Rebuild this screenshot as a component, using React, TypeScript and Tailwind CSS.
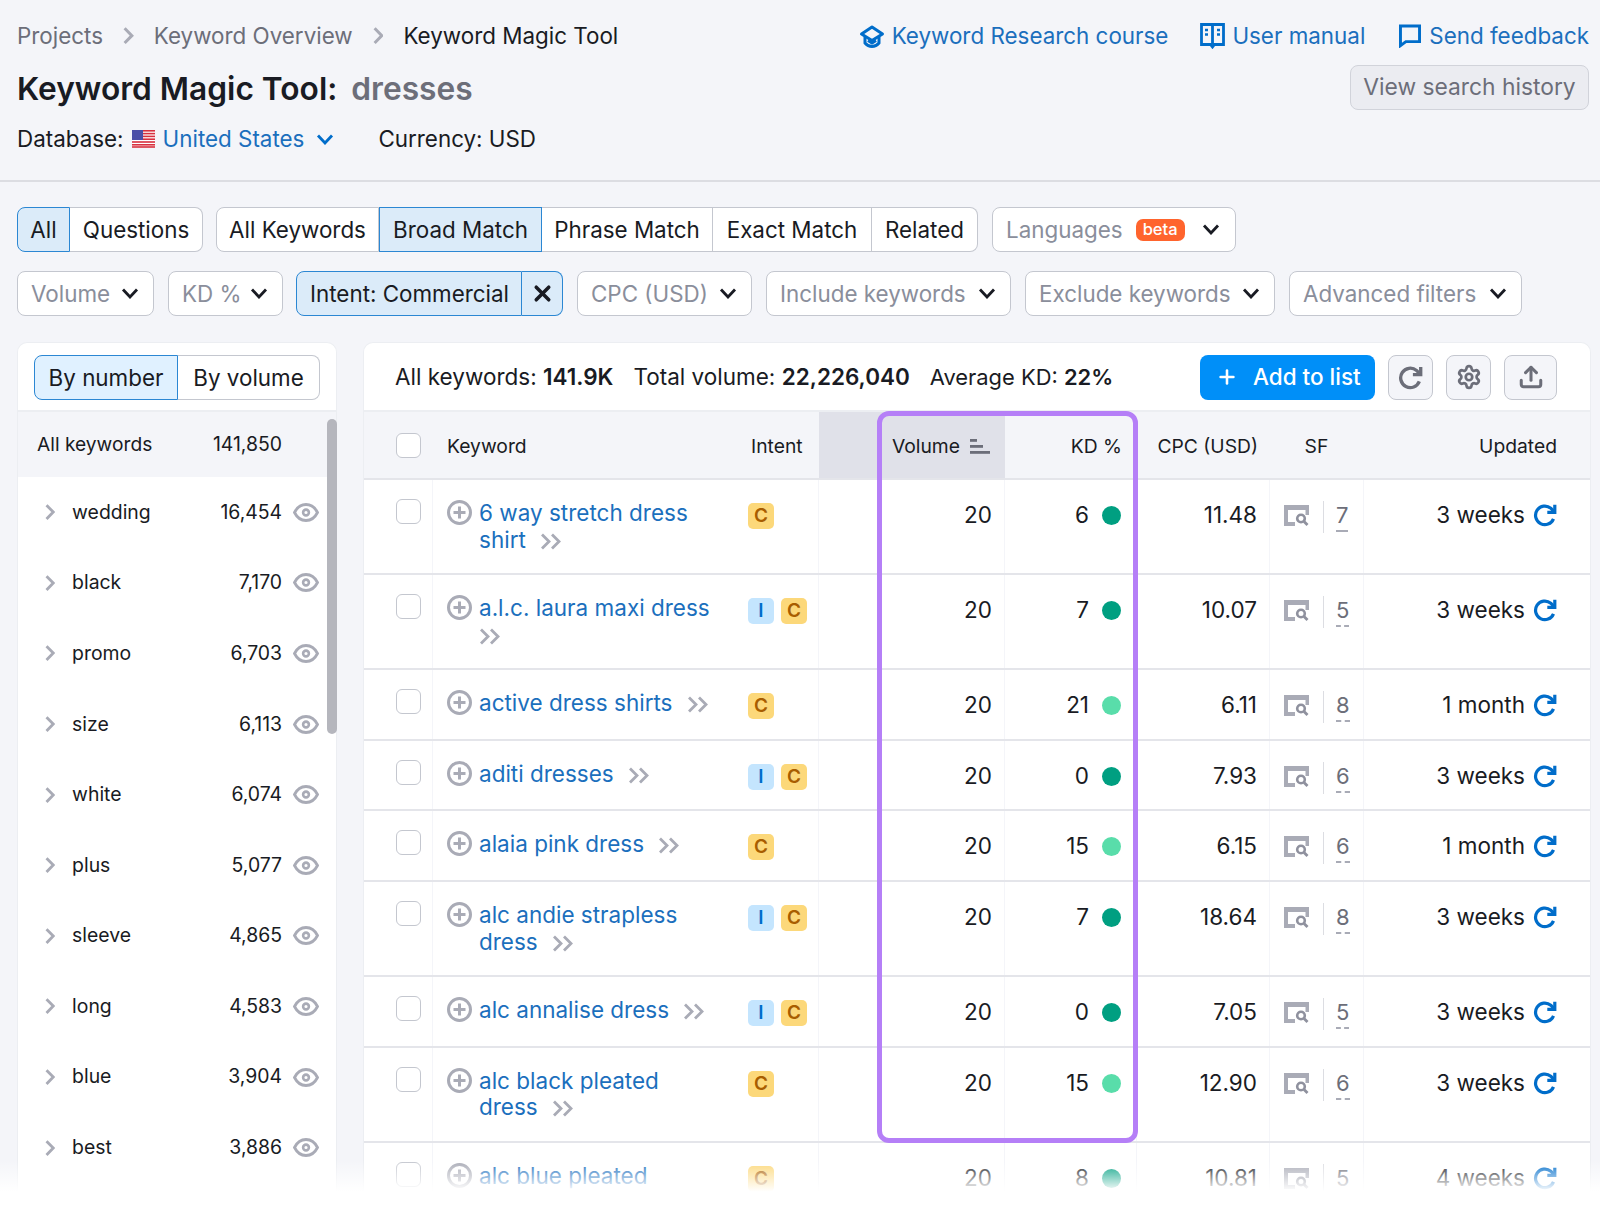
import React from "react";
import { Settings, Upload, Plus, X } from "lucide-react";

const Down = ({ className = "" }: { className?: string }) => (
  <svg viewBox="0 0 18 11" className={"w-[18px] h-[11px] shrink-0 " + className} fill="none" stroke="#191b23" strokeWidth="2.800">
    <path d="M2 1.500 9 9l7-7.500" />
  </svg>
);
const Right = ({ s = 14 }: { s?: number }) => (
  <svg viewBox="0 0 10 16" style={{ width: s * 0.72, height: s * 1.15 }} fill="none" stroke="#a9abb6" strokeWidth="2.800">
    <path d="M1.500 1.200 8.200 8l-6.700 6.800" />
  </svg>
);
const Dbl = ({ gap }: { gap: boolean }) => (
  <svg viewBox="0 0 22 17" className={"inline-block w-[22px] h-[17px] align-[-2px] " + (gap ? "ml-[14px]" : "")} fill="none" stroke="#a9abb6" strokeWidth="2.800">
    <path d="M2 1.500 9 8.500 2 15.500M12 1.500l7 7-7 7" />
  </svg>
);
const PlusCircle = () => (
  <svg viewBox="0 0 25 25" className="w-[25px] h-[25px] shrink-0" fill="none" stroke="#a9abb6" strokeWidth="3">
    <circle cx="12.500" cy="12.500" r="11" />
    <path d="M12.500 6.500v12M6.500 12.500h12" />
  </svg>
);
const SFIcon = () => (
  <svg viewBox="0 0 25 21" className="w-[25px] h-[21px] shrink-0">
    <path d="M0 0h25v5H4v12h7v4H0z" fill="#a9abb6" />
    <path d="M21.500 5H25v5h-3.500z" fill="#a9abb6" />
    <circle cx="17" cy="13.500" r="3.800" fill="none" stroke="#8f919e" strokeWidth="2.600" />
    <path d="m20 16.500 3.500 3.500" stroke="#8f919e" strokeWidth="2.800" />
  </svg>
);
const Redo = ({ size, color }: { size: number; color: string }) => (
  <svg viewBox="0 0 24 24" style={{ width: size, height: size }} className="shrink-0" fill="none" stroke={color} strokeWidth="3.200">
    <path d="M20.500 15.800A9.300 9.300 0 1 1 17.800 5.200L21 8.600" />
    <path d="M21.800 1.800v7.500h-7.500" />
  </svg>
);
const Eye = () => (
  <svg viewBox="0 0 26 19" className="w-[26px] h-[19px] shrink-0" fill="none" stroke="#a9abb6" strokeWidth="2.800">
    <path d="M1.500 9.500C4 4.500 8.500 1.500 13 1.500S22 4.500 24.500 9.500C22 14.500 17.500 17.500 13 17.500S4 14.500 1.500 9.500Z" />
    <circle cx="13" cy="9.500" r="2.900" strokeWidth="2.600" />
  </svg>
);
const Cap = () => (
  <svg viewBox="0 0 26 23" className="w-[26px] h-[23px] shrink-0" fill="none" stroke="#006dca" strokeWidth="3">
    <path d="M2.500 9 13 2l10.500 7L13 15.500z" strokeLinejoin="round" />
    <path d="M6 12v6c2 2.500 4.200 3.500 7 3.500s5-1 7-3.500v-6" />
    <path d="m9 15.500 4 2.500 4-2.500" />
  </svg>
);
const Book = () => (
  <svg viewBox="0 0 25 26" className="w-[25px] h-[26px] shrink-0" fill="none" stroke="#006dca" strokeWidth="2.800">
    <path d="M1.500 1.500h22v20h-9l-2 2.500-2-2.500h-9zM12.500 1.500v20" />
    <path d="M5 7h3M5 11.500h3M17 7h3M17 11.500h3" strokeWidth="2.600" />
  </svg>
);
const Chat = () => (
  <svg viewBox="0 0 24 25" className="w-[22px] h-[24px] shrink-0" fill="none" stroke="#006dca" strokeWidth="3.200">
    <path d="M1.600 1.600h20.800v17H7.500l-5.900 4.400z" />
  </svg>
);
const Flag = () => (
  <svg viewBox="0 0 23 18" className="w-[23px] h-[18px] shrink-0">
    <rect width="23" height="18" fill="#fff" />
    {[0, 2.800, 5.600, 8.400, 11.200, 14, 16.200].map((y) => (
      <rect key={y} y={y} width="23" height="1.600" fill="#d8303f" />
    ))}
    <rect width="11" height="10" fill="#4b4fa8" />
  </svg>
);
const SortIcon = () => (
  <svg viewBox="0 0 20 15" className="w-[20px] h-[15px]" fill="#6c6e79">
    <rect x="0" y="0" width="7" height="2.800" />
    <rect x="0" y="6" width="13" height="2.800" />
    <rect x="0" y="12" width="20" height="2.800" />
  </svg>
);

const seg = "h-full flex items-center justify-center pt-[1px] border-y border-r border-[#c4c7cf] bg-white text-[#191b23]";
const segActive = "h-full flex items-center justify-center pt-[1px] border border-[#2b87d3] bg-[#dbebf9] text-[#191b23]";

const Filter = ({ label, w }: { label: string; w: string }) => (
  <div className={"h-full flex items-center justify-between pl-[13px] pr-[14px] bg-white border border-[#c4c7cf] rounded-[8px] text-[#8a8e9b] " + w}>
    <span>{label}</span>
    <Down />
  </div>
);

type Row = {
  k: string[];
  i: string;
  kd: string;
  dark: boolean;
  cpc: string;
  sf: string;
  up: string;
  noArrow?: boolean;
};
const rows: Row[] = [
  { k: ["6 way stretch dress", "shirt"], i: "C", kd: "6", dark: true, cpc: "11.48", sf: "7", up: "3 weeks" },
  { k: ["a.l.c. laura maxi dress", ""], i: "IC", kd: "7", dark: true, cpc: "10.07", sf: "5", up: "3 weeks" },
  { k: ["active dress shirts"], i: "C", kd: "21", dark: false, cpc: "6.11", sf: "8", up: "1 month" },
  { k: ["aditi dresses"], i: "IC", kd: "0", dark: true, cpc: "7.93", sf: "6", up: "3 weeks" },
  { k: ["alaia pink dress"], i: "C", kd: "15", dark: false, cpc: "6.15", sf: "6", up: "1 month" },
  { k: ["alc andie strapless", "dress"], i: "IC", kd: "7", dark: true, cpc: "18.64", sf: "8", up: "3 weeks" },
  { k: ["alc annalise dress"], i: "IC", kd: "0", dark: true, cpc: "7.05", sf: "5", up: "3 weeks" },
  { k: ["alc black pleated", "dress"], i: "C", kd: "15", dark: false, cpc: "12.90", sf: "6", up: "3 weeks" },
  { k: ["alc blue pleated"], i: "C", kd: "8", dark: true, cpc: "10.81", sf: "5", up: "4 weeks", noArrow: true },
];

const side: [string, string][] = [
  ["wedding", "16,454"],
  ["black", "7,170"],
  ["promo", "6,703"],
  ["size", "6,113"],
  ["white", "6,074"],
  ["plus", "5,077"],
  ["sleeve", "4,865"],
  ["long", "4,583"],
  ["blue", "3,904"],
  ["best", "3,886"],
];

const cols = "grid grid-cols-[69px_305px_81px_186px_132px_133px_94px_1fr]";
const cell = "border-r border-[#f4f5f9]";
const toolBtn = "ml-[13px] h-[45px] flex items-center justify-center rounded-[8px] border border-[#c4c7cf] bg-[#f4f5f9] text-[#6c6e79]";

export default function App() {
  return (
    <div className="relative w-[1600px] h-[1208px] overflow-hidden bg-[#f4f5f9] text-[#191b23] font-['Inter',sans-serif]">
      <header className="h-[182px] border-b-2 border-[#dcdde2] pl-[17px] pr-[11px]">
        <div className="flex justify-between pt-[18px] h-[54px] leading-[36px] text-[22.400px]">
          <div className="flex items-center">
            <span className="text-[#6c6e79]">Projects</span>
            <span className="mx-[20px]"><Right s={15} /></span>
            <span className="text-[#6c6e79]">Keyword Overview</span>
            <span className="mx-[20px]"><Right s={15} /></span>
            <span>Keyword Magic Tool</span>
          </div>
          <div className="flex items-center text-[#1b6fbd]">
            <Cap />
            <span className="ml-[7px]">Keyword Research course</span>
            <span className="ml-[32px]"><Book /></span>
            <span className="ml-[7px]">User manual</span>
            <span className="ml-[34px]"><Chat /></span>
            <span className="ml-[8px]">Send feedback</span>
          </div>
        </div>
        <div className="mt-[11px] h-[45px] flex items-center justify-between">
          <h1 className="pt-[2px] text-[31.700px] font-semibold">
            Keyword Magic Tool:<span className="ml-[14px] text-[#6c6e79]">dresses</span>
          </h1>
          <div className="w-[239px] h-full flex items-center justify-center rounded-[8px] border border-[#d1d3da] bg-[#ebecf1] text-[22.800px] text-[#6c6e79]">
            View search history
          </div>
        </div>
        <div className="mt-[13px] h-[32px] flex items-center text-[22.400px]">
          <span>Database:</span>
          <span className="ml-[8px]"><Flag /></span>
          <span className="ml-[8px] text-[#1b6fbd]">United States</span>
          <svg viewBox="0 0 18 11" className="ml-[12px] w-[18px] h-[11px]" fill="none" stroke="#006dca" strokeWidth="2.800"><path d="M2 1.500 9 9l7-7.500" /></svg>
          <span className="ml-[44px]">Currency: USD</span>
        </div>
      </header>

      <div className="pl-[17px] pr-[11px] pt-[25px] text-[22.400px]">
        <div className="h-[45px] flex">
          <div className={segActive + " w-[53px] rounded-l-[8px]"}>All</div>
          <div className={seg + " w-[133px] rounded-r-[8px]"}>Questions</div>
          <div className={seg + " ml-[13px] w-[163px] border-l rounded-l-[8px]"}>All Keywords</div>
          <div className={segActive + " w-[163px]"}>Broad Match</div>
          <div className={seg + " w-[171px]"}>Phrase Match</div>
          <div className={seg + " w-[159px]"}>Exact Match</div>
          <div className={seg + " w-[106px] rounded-r-[8px]"}>Related</div>
          <div className="ml-[14px] w-[244px] h-full flex items-center pl-[13px] bg-white border border-[#c4c7cf] rounded-[8px] text-[#8a8e9b]">
            <span>Languages</span>
            <span className="ml-[13px] w-[49px] h-[22px] flex items-center justify-center rounded-[7px] bg-[#ff642d] text-white text-[16.500px] font-medium">beta</span>
            <Down className="ml-[17px]" />
          </div>
        </div>
        <div className="mt-[19px] h-[45px] flex gap-[14px]">
          <Filter label="Volume" w="w-[137px]" />
          <Filter label="KD %" w="w-[115px]" />
          <div className="flex h-full w-[267px] -ml-[1px]">
            <div className="flex-1 flex items-center pl-[13px] bg-[#dbebf9] border border-[#2b87d3] rounded-l-[8px]">Intent: Commercial</div>
            <div className="w-[41px] flex items-center justify-center bg-[#dbebf9] border-y border-r border-[#2b87d3] rounded-r-[8px]">
              <X size={25} strokeWidth={3.400} color="#191b23" />
            </div>
          </div>
          <Filter label="CPC (USD)" w="w-[175px]" />
          <Filter label="Include keywords" w="w-[245px]" />
          <Filter label="Exclude keywords" w="w-[250px]" />
          <Filter label="Advanced filters" w="w-[233px]" />
        </div>
      </div>

      <div className="mt-[26px] pl-[17px] pr-[9px] flex gap-[26px] items-start">
        <aside className="relative w-[320px] h-[866px] bg-white rounded-t-[10px] border-t border-x border-[#eceef2]">
          <div className="h-[69px] pl-[16px] pt-[12px] border-b-2 border-[#eceef2]">
            <div className="flex h-[45px] w-[286px] text-[22.400px]">
              <div className={segActive + " w-[144px] rounded-l-[8px] !bg-[#e0f1ff]"}>By number</div>
              <div className={seg + " flex-1 rounded-r-[8px]"}>By volume</div>
            </div>
          </div>
          <div className="h-[65px] flex items-center bg-[#f4f5f9] pl-[19px] text-[19.400px]">
            <span className="w-[151px] text-[19.200px]">All keywords</span>
            <span className="w-[94px] text-right">141,850</span>
          </div>
          <div className="text-[19.400px]">
            {side.map(([n, v]) => (
              <div key={n} className="h-[70.600px] flex items-center pl-[27px]">
                <Right s={14} />
                <span className="ml-[17px] w-[120px]">{n}</span>
                <span className="w-[90px] text-right">{v}</span>
                <span className="ml-[11px]"><Eye /></span>
              </div>
            ))}
          </div>
          <div className="absolute left-[309px] top-[76px] w-[10px] h-[315px] rounded-full bg-[#b5b6bd]" />
        </aside>

        <main className="flex-1 h-[866px] bg-white rounded-t-[10px] border-t border-x border-[#eceef2]">
          <div className="h-[69px] flex items-center pl-[31px] pr-[33px] pt-[1px] text-[22.500px] border-b-2 border-[#eceef2]">
            <span>All keywords: <b className="font-semibold">141.9K</b></span>
            <span className="ml-[20px]">Total volume: <b className="font-semibold">22,226,040</b></span>
            <span className="ml-[20px] text-[21.900px]">Average KD: <b className="font-semibold">22%</b></span>
            <div className="ml-auto w-[175px] h-[45px] flex items-center pl-[16px] rounded-[8px] bg-[#008ff8] text-white font-medium text-[22.500px]">
              <Plus size={22} strokeWidth={2.800} />
              <span className="ml-[15px]">Add to list</span>
            </div>
            <div className={toolBtn + " w-[45px]"}><Redo size={25} color="#6c6e79" /></div>
            <div className={toolBtn + " w-[45px]"}><Settings size={26} strokeWidth={2.500} /></div>
            <div className={toolBtn + " w-[53px]"}><Upload size={26} strokeWidth={2.800} /></div>
          </div>

          <div className={cols + " h-[68px] bg-[#f4f5f9] border-b-2 border-[#e4e5ea] text-[19.300px]"}>
            <div className={cell + " flex items-center pl-[32px]"}>
              <span className="w-[25px] h-[25px] rounded-[6px] bg-white border border-[#c4c7cf]" />
            </div>
            <div className="flex items-center pl-[14px] pt-[3px]">Keyword</div>
            <div className="flex items-center pl-[13px] pt-[3px]">Intent</div>
            <div className="flex items-center justify-end pr-[15px] gap-[10px] pt-[3px] bg-[#e0e1e9]">
              <span>Volume</span>
              <SortIcon />
            </div>
            <div className="flex items-center justify-end pr-[15px] pt-[3px]">KD %</div>
            <div className={cell + " flex items-center justify-end pr-[11px] pt-[3px]"}>CPC (USD)</div>
            <div className={cell + " flex items-center justify-center pt-[3px]"}>SF</div>
            <div className="flex items-center justify-end pr-[33px] pt-[3px]">Updated</div>
          </div>

          {rows.map((r) => (
            <div key={r.k[0]} className={cols + " min-h-[70.700px] border-b-2 border-[#e4e5ea] text-[22.500px]"}>
              <div className={cell + " pl-[32px] pt-[19px]"}>
                <span className="block w-[25px] h-[25px] rounded-[6px] bg-white border border-[#c4c7cf]" />
              </div>
              <div className="pl-[14px] pt-[20px] pb-[20px] flex items-start gap-[7px] leading-[26.500px] text-[#1b6fbd]">
                <PlusCircle />
                <div>
                  {r.k.map((line, i) => (
                    <div key={i} className="whitespace-nowrap">
                      {line}
                      {i === r.k.length - 1 && !r.noArrow && <Dbl gap={line !== ""} />}
                    </div>
                  ))}
                </div>
              </div>
              <div className={cell + " pl-[10px] pt-[23px] flex gap-[7px] items-start text-[19px] font-semibold leading-[26px]"}>
                {r.i.split("").map((c) => (
                  <span key={c} className={"w-[26px] h-[26px] rounded-[5px] flex items-center justify-center " + (c === "I" ? "bg-[#c4e5fe] text-[#006dca]" : "bg-[#fcd87a] text-[#a85d00]")}>{c}</span>
                ))}
              </div>
              <div className={cell + " pt-[21px] pr-[12px] text-right leading-[27px]"}>20</div>
              <div className={cell + " pt-[21px] pr-[15px] flex justify-end items-start gap-[13px] leading-[27px]"}>
                <span>{r.kd}</span>
                <span className={"mt-[5px] w-[19px] h-[19px] rounded-full " + (r.dark ? "bg-[#009f81]" : "bg-[#59ddaa]")} />
              </div>
              <div className={cell + " pt-[21px] pr-[12px] text-right leading-[27px]"}>{r.cpc}</div>
              <div className={cell + " pt-[21px] pl-[14px] flex items-start"}>
                <span className="mt-[4px]"><SFIcon /></span>
                <span className="ml-[14px] w-[1px] h-[32px] bg-[#dcdde2]" />
                <span className="ml-[12px] mt-[2px] h-[29px] leading-[25px] border-b-2 border-dashed border-[#a9abb6] text-[#6c6e79] text-[22px]">{r.sf}</span>
              </div>
              <div className="pt-[21px] pr-[33px] flex justify-end items-start gap-[8px] leading-[27px]">
                <span>{r.up}</span>
                <span className="mt-[2px]"><Redo size={24} color="#006dca" /></span>
              </div>
            </div>
          ))}
        </main>
      </div>

      <div className="absolute left-[877px] top-[411px] w-[261px] h-[732px] rounded-[12px] border-[5px] border-[#b57ff7]" />
      <div className="absolute left-0 right-0 top-[1160px] h-[48px] bg-linear-to-b from-transparent to-white to-[66%]" />
    </div>
  );
}
